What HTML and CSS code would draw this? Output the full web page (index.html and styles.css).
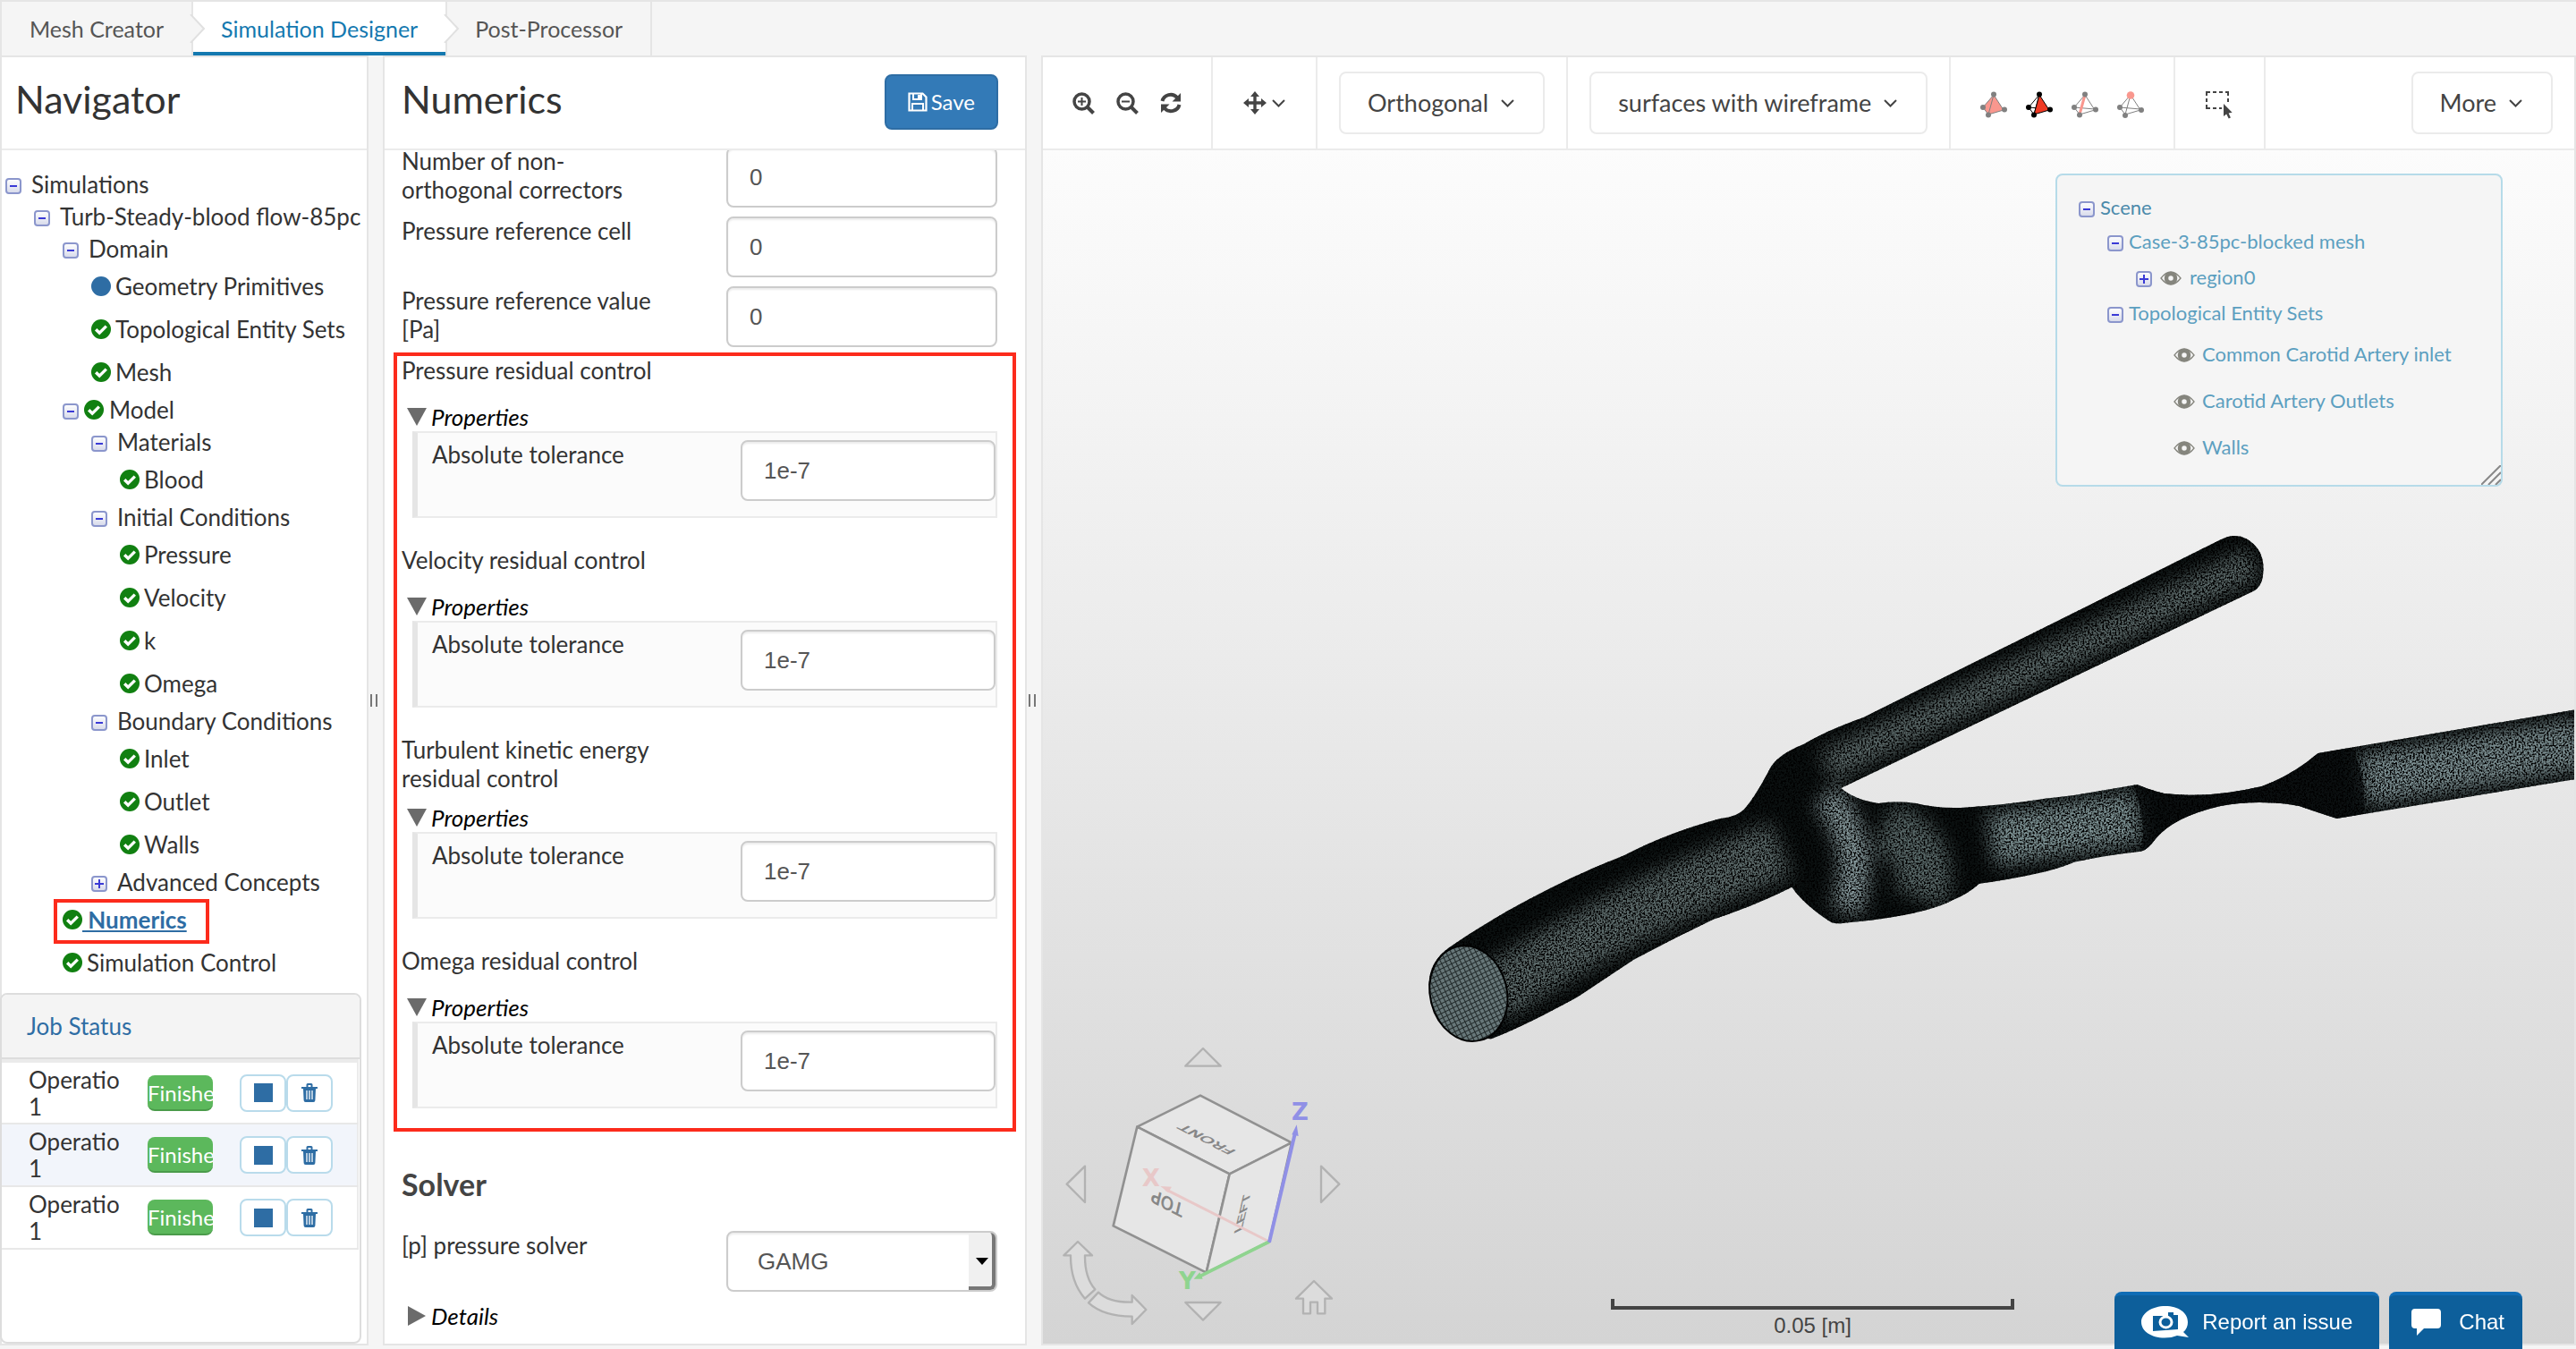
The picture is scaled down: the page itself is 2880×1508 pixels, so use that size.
FILE: index.html
```html
<!DOCTYPE html>
<html lang="en">
<head>
<meta charset="utf-8">
<meta name="viewport" content="width=device-width, initial-scale=1">
<title>Simulation Designer</title>
<link rel="stylesheet" href="styles.css">
</head>
<body>
<svg class="defs" width="0" height="0" aria-hidden="true">
  <defs>
    <linearGradient id="tg" x1="0" y1="0" x2="0" y2="1"><stop offset="0" stop-color="#fff"/><stop offset="1" stop-color="#d6d9ea"/></linearGradient>
    <symbol id="minus" viewBox="0 0 18 18"><rect x="1" y="1" width="16" height="16" rx="3" fill="url(#tg)" stroke="#8b96cc" stroke-width="2"/><path d="M5 9h8" stroke="#3a3ad6" stroke-width="2"/></symbol>
    <symbol id="plus" viewBox="0 0 18 18"><rect x="1" y="1" width="16" height="16" rx="3" fill="url(#tg)" stroke="#8b96cc" stroke-width="2"/><path d="M4 9h10M9 4v10" stroke="#3a3ad6" stroke-width="2"/></symbol>
    <symbol id="check" viewBox="0 0 22 22"><circle cx="11" cy="11" r="11" fill="#118011"/><path d="M5.200 11.200l4 4 7.600-7.600" fill="none" stroke="#fff" stroke-width="3.400"/></symbol>
    <symbol id="dot" viewBox="0 0 22 22"><circle cx="11" cy="11" r="11" fill="#2e6da4"/></symbol>
    <symbol id="eye" viewBox="0 0 24 16"><path d="M1 8Q12-6 23 8Q12 22 1 8z" fill="none" stroke="#85857d" stroke-width="1.300"/><circle cx="12" cy="8" r="5" fill="none" stroke="#85857d" stroke-width="4.500"/></symbol>
    <symbol id="chev" viewBox="0 0 15 9"><path d="M1 1l6.500 6.500L14 1" fill="none" stroke="#444" stroke-width="2"/></symbol>
    <symbol id="trash" viewBox="0 0 18 21"><path d="M0 4h18v2H0zM5.500 4V1.500Q5.500 0 7 0h4q1.500 0 1.500 1.500V4h-2V2h-3v2zM2 6h14l-.600 13q0 2-2 2H4.600q-2 0-2-2z" fill="#2e6da4"/><path d="M6 8v10M9 8v10M12 8v10" stroke="#fff" stroke-width="1.300"/></symbol>
    <symbol id="down" viewBox="0 0 22 20"><path d="M0 0h22L11 20z" fill="#6b6b6b"/></symbol>
    <symbol id="right" viewBox="0 0 22 22"><path d="M1 0v22l20-11z" fill="#6b6b6b"/></symbol>
  </defs>
</svg>

<div class="app">
  <nav class="tabs">
    <a class="tab" href="#mesh">Mesh Creator<svg class="tip" viewBox="0 0 18 32"><path d="M1 0L16 16 1 32" fill="#f5f5f5" stroke="#e0e0e0" stroke-width="2"/></svg></a>
    <a class="tab tab-on" href="#designer">Simulation Designer<svg class="tip" viewBox="0 0 18 32"><path d="M1 0L16 16 1 32" fill="#fff" stroke="#e0e0e0" stroke-width="2"/></svg></a>
    <a class="tab" href="#post">Post-Processor</a>
  </nav>

  <main class="columns">
    <section class="panel navigator">
      <header class="head head-nav"><h1>Navigator</h1></header>
      <ul class="tree">
        <li><div class="row"><svg class="toggle"><use href="#minus"/></svg><span>Simulations</span></div>
          <ul>
            <li><div class="row"><svg class="toggle"><use href="#minus"/></svg><span>Turb-Steady-blood flow-85pc</span></div>
              <ul>
                <li><div class="row"><svg class="toggle"><use href="#minus"/></svg><span>Domain</span></div>
                  <ul>
                    <li class="row leaf"><svg class="state"><use href="#dot"/></svg><span>Geometry Primitives</span></li>
                    <li class="row leaf"><svg class="state"><use href="#check"/></svg><span>Topological Entity Sets</span></li>
                    <li class="row leaf"><svg class="state"><use href="#check"/></svg><span>Mesh</span></li>
                  </ul>
                </li>
                <li><div class="row row-state"><svg class="toggle"><use href="#minus"/></svg><svg class="state"><use href="#check"/></svg><span>Model</span></div>
                  <ul>
                    <li><div class="row"><svg class="toggle"><use href="#minus"/></svg><span>Materials</span></div>
                      <ul><li class="row leaf"><svg class="state"><use href="#check"/></svg><span>Blood</span></li></ul>
                    </li>
                    <li><div class="row"><svg class="toggle"><use href="#minus"/></svg><span>Initial Conditions</span></div>
                      <ul>
                        <li class="row leaf"><svg class="state"><use href="#check"/></svg><span>Pressure</span></li>
                        <li class="row leaf"><svg class="state"><use href="#check"/></svg><span>Velocity</span></li>
                        <li class="row leaf"><svg class="state"><use href="#check"/></svg><span>k</span></li>
                        <li class="row leaf"><svg class="state"><use href="#check"/></svg><span>Omega</span></li>
                      </ul>
                    </li>
                    <li><div class="row"><svg class="toggle"><use href="#minus"/></svg><span>Boundary Conditions</span></div>
                      <ul>
                        <li class="row leaf"><svg class="state"><use href="#check"/></svg><span>Inlet</span></li>
                        <li class="row leaf"><svg class="state"><use href="#check"/></svg><span>Outlet</span></li>
                        <li class="row leaf"><svg class="state"><use href="#check"/></svg><span>Walls</span></li>
                      </ul>
                    </li>
                    <li><div class="row"><svg class="toggle"><use href="#plus"/></svg><span>Advanced Concepts</span></div></li>
                  </ul>
                </li>
                <li class="row leaf current"><svg class="state"><use href="#check"/></svg><a href="#numerics">&nbsp;Numerics</a></li>
                <li class="row leaf"><svg class="state"><use href="#check"/></svg><span>Simulation Control</span></li>
              </ul>
            </li>
          </ul>
        </li>
      </ul>

      <section class="jobs">
        <h2 class="jobs-head"><a href="#jobs">Job Status</a></h2>
        <table class="jobs-table">
          <tr><td class="col-op"><div class="op">Operation 1</div></td><td class="col-state"><div class="badge">Finished</div></td><td><div class="acts"><button class="act" aria-label="Stop"><i class="stop"></i></button><button class="act" aria-label="Delete"><svg class="trash"><use href="#trash"/></svg></button></div></td></tr>
          <tr class="alt"><td><div class="op">Operation 1</div></td><td><div class="badge">Finished</div></td><td><div class="acts"><button class="act" aria-label="Stop"><i class="stop"></i></button><button class="act" aria-label="Delete"><svg class="trash"><use href="#trash"/></svg></button></div></td></tr>
          <tr><td><div class="op">Operation 1</div></td><td><div class="badge">Finished</div></td><td><div class="acts"><button class="act" aria-label="Stop"><i class="stop"></i></button><button class="act" aria-label="Delete"><svg class="trash"><use href="#trash"/></svg></button></div></td></tr>
        </table>
      </section>
      <i class="grip"></i>
    </section>

    <section class="panel numerics">
      <header class="head head-form">
        <h1>Numerics</h1>
        <button class="save"><svg viewBox="0 0 22 22" width="22" height="22"><path d="M1.500 1.500h15l4 4v15h-19z" fill="none" stroke="#fff" stroke-width="2.200"/><path d="M6 2v6h9V2M5 20v-7h12v7" fill="none" stroke="#fff" stroke-width="2"/><path d="M11 3h3v4h-3z" fill="#fff"/></svg>Save</button>
      </header>
      <div class="scroll">
        <form class="form">
          <div class="field"><label for="f1">Number of non-orthogonal correctors</label><input id="f1" type="text" value="0"></div>
          <div class="field"><label for="f2">Pressure reference cell</label><input id="f2" type="text" value="0"></div>
          <div class="field"><label for="f3">Pressure reference value [Pa]</label><input id="f3" type="text" value="0"></div>
          <div class="residuals">
            <section class="block"><h3>Pressure residual control</h3><div class="sub"><svg><use href="#down"/></svg>Properties</div><div class="box"><label for="r1">Absolute tolerance</label><input id="r1" type="text" value="1e-7"></div></section>
            <section class="block"><h3>Velocity residual control</h3><div class="sub"><svg><use href="#down"/></svg>Properties</div><div class="box"><label for="r2">Absolute tolerance</label><input id="r2" type="text" value="1e-7"></div></section>
            <section class="block"><h3>Turbulent kinetic energy residual control</h3><div class="sub"><svg><use href="#down"/></svg>Properties</div><div class="box"><label for="r3">Absolute tolerance</label><input id="r3" type="text" value="1e-7"></div></section>
            <section class="block"><h3>Omega residual control</h3><div class="sub"><svg><use href="#down"/></svg>Properties</div><div class="box"><label for="r4">Absolute tolerance</label><input id="r4" type="text" value="1e-7"></div></section>
          </div>
          <h2>Solver</h2>
          <div class="field"><label for="s1">[p] pressure solver</label><div class="select"><select id="s1"><option>GAMG</option></select></div></div>
          <div class="sub"><svg><use href="#right"/></svg>Details</div>
        </form>
      </div>
      <i class="grip"></i>
    </section>

    <section class="panel viewer">
      <div class="toolbar">
        <div class="group zooms">
          <button class="tool" aria-label="Zoom in"><svg width="25" height="25" viewBox="0 0 25 25"><circle cx="10.500" cy="10.500" r="8.500" fill="none" stroke="#444" stroke-width="3.500"/><path d="M16.500 16.500l7 7" stroke="#444" stroke-width="4"/><path d="M6 10.500h9M10.500 6v9" stroke="#444" stroke-width="2"/></svg></button>
          <button class="tool" aria-label="Zoom out"><svg width="25" height="25" viewBox="0 0 25 25"><circle cx="10.500" cy="10.500" r="8.500" fill="none" stroke="#444" stroke-width="3.500"/><path d="M16.500 16.500l7 7" stroke="#444" stroke-width="4"/><path d="M6 10.500h9" stroke="#444" stroke-width="2"/></svg></button>
          <button class="tool" aria-label="Reset view"><svg width="24" height="24" viewBox="0 0 24 24"><path d="M2.500 10A9.500 9 0 0 1 19 6M21.500 14A9.500 9 0 0 1 5 18" fill="none" stroke="#444" stroke-width="4"/><path d="M23 1v9.500h-9.500zM1 23v-9.500h9.500z" fill="#444"/></svg></button>
        </div>
        <div class="group move"><button class="tool"  aria-label="Move"><svg width="26" height="26" viewBox="0 0 26 26"><path d="M13 0l5 6h-3.300v5.300H20V8l6 5-6 5v-3.300h-5.300V20H18l-5 6-5-6h3.300v-5.300H6V18l-6-5 6-5v3.300h5.300V6H8z" fill="#444"/></svg><svg class="chev"><use href="#chev"/></svg></button></div>
        <div class="group"><button class="drop">Orthogonal<svg class="chev"><use href="#chev"/></svg></button></div>
        <div class="group"><button class="drop">surfaces with wireframe<svg class="chev"><use href="#chev"/></svg></button></div>
        <div class="group picks">
          <button class="tool" aria-label="Pick volumes"><svg width="30" height="30" viewBox="0 0 30 30"><path d="M15 4L3 18l6 8 17-5z" fill="#f9978e" stroke="#808080"/><path d="M15 4L9 26" stroke="#808080"/><g fill="#808080"><circle cx="15" cy="3.500" r="3"/><circle cx="3" cy="18" r="3"/><circle cx="9" cy="26.500" r="3"/><circle cx="27" cy="20.500" r="3"/></g></svg></button>
          <button class="tool" aria-label="Pick faces"><svg width="30" height="30" viewBox="0 0 30 30"><path d="M15 4L3 18l6 8zM3 18l23 2" fill="none" stroke="#000"/><path d="M15 4L9 26l17-5z" fill="#f03a24" stroke="#000"/><g fill="#000"><circle cx="15" cy="3.500" r="3"/><circle cx="3" cy="18" r="3"/><circle cx="9" cy="26.500" r="3"/><circle cx="27" cy="20.500" r="3"/></g></svg></button>
          <button class="tool" aria-label="Pick edges"><svg width="30" height="30" viewBox="0 0 30 30"><path d="M15 4L3 18l6 8 17-5zM3 18l23 2" fill="none" stroke="#808080"/><path d="M15 4L9 26" stroke="#f9978e" stroke-width="3"/><g fill="#808080"><circle cx="15" cy="3.500" r="3"/><circle cx="3" cy="18" r="3"/><circle cx="9" cy="26.500" r="3"/><circle cx="27" cy="20.500" r="3"/></g></svg></button>
          <button class="tool" aria-label="Pick vertices"><svg width="30" height="30" viewBox="0 0 30 30"><path d="M15 4L3 18l6 8 17-5zM3 18l23 2M15 4L9 26" fill="none" stroke="#808080"/><circle cx="15" cy="4.500" r="4.300" fill="#f9978e"/><g fill="#808080"><circle cx="3" cy="18" r="3"/><circle cx="9" cy="27" r="3"/><circle cx="27" cy="21" r="3"/></g></svg></button>
        </div>
        <div class="group boxpick"><button class="tool" aria-label="Box select"><svg width="30" height="31" viewBox="0 0 30 31"><path d="M1 5V1h4M8 1h4M15 1h4M22 1h3v4M25 8v4M1 8v4M1 15v4h4M8 19h4M15 19h3" fill="none" stroke="#444" stroke-width="2"/><path d="M20 14v14l3.200-2.600 2.500 5.200 2.200-1.200-2.300-4.900 4-.800z" fill="#444"/></svg></button></div>
        <button class="drop more">More<svg class="chev"><use href="#chev"/></svg></button>
      </div>

      <div class="canvas">
        <svg class="model" viewBox="1166 168 1712 1336" preserveAspectRatio="xMaxYMid meet" role="img" aria-label="Artery mesh">
          <defs>
            <clipPath id="body"><path d="M1619 1060C1680 1018 1750 982 1813 958Q1862 932 1922 916Q1942 914 1950 904Q1962 890 1977 861Q1985 845 2015 833Q2040 818 2082 803L2482 604Q2498 596 2511 603Q2530 614 2530 636Q2530 655 2520 661L2057 882Q2072 895 2099 899Q2120 896 2141 899Q2165 905 2191 904Q2240 901 2284 894Q2300 892 2318 890L2389 878Q2402 884 2419 888Q2470 894 2528 880Q2562 868 2591 843L2880 794V872L2612 916Q2590 909 2570 902Q2525 894 2482 902Q2430 914 2410 938Q2400 952 2393 953Q2355 957 2318 965Q2290 978 2212 989Q2200 1000 2183 1007Q2150 1025 2061 1033Q2050 1035 2044 1031Q2015 1012 2002 993Q1960 1014 1914 1029Q1870 1050 1825 1074L1762 1116Q1700 1150 1665 1163Q1610 1160 1597 1115Q1590 1080 1619 1060z"/></clipPath>
            <filter id="soft" x="-20%" y="-20%" width="140%" height="140%"><feGaussianBlur stdDeviation="10"/></filter>
            <filter id="grain" x="0" y="0" width="100%" height="100%"><feTurbulence type="fractalNoise" baseFrequency="0.500" numOctaves="2" seed="4"/><feColorMatrix values="0 0 0 0 0  0 0 0 0 0  0 0 0 0 0  4 0 0 0 -1.650"/></filter>
            <pattern id="grid" width="5" height="5" patternUnits="userSpaceOnUse" patternTransform="rotate(-12)"><path d="M0 0H5M0 0V5" stroke="#0b1010" stroke-width="2.200"/></pattern>
          </defs>
          <g clip-path="url(#body)">
            <path d="M1580 580H2880V1180H1580z" fill="#0b1010"/>
            <g filter="url(#soft)" fill="none">
              <path d="M1665 1115Q1790 1030 1990 950" stroke="#5a6868" stroke-width="64"/>
              <path d="M2040 858L2520 630" stroke="#5b6969" stroke-width="36"/>
              <path d="M2040 890Q2090 950 2062 1020" stroke="#8b9ea1" stroke-width="34"/>
              <path d="M2105 925Q2165 950 2145 1005" stroke="#596767" stroke-width="60"/>
              <path d="M2225 940L2392 914" stroke="#7c9092" stroke-width="60"/>
              <path d="M2640 873L2890 832" stroke="#7a8d90" stroke-width="60"/>
            </g>
            <path d="M2384 878Q2400 920 2393 953Q2410 950 2440 918L2480 903H2530L2612 916Q2645 918 2643 900Q2643 860 2628 836L2591 843Q2560 868 2528 880L2444 890z" fill="#0b1011" opacity=".7"/>
            <path d="M1580 580H2880V1180H1580z" filter="url(#grain)"/>
          </g>
          <ellipse cx="1640" cy="1112" rx="43" ry="54" transform="rotate(-14 1640 1112)" fill="#68787a"/>
          <ellipse cx="1640" cy="1112" rx="43" ry="54" transform="rotate(-14 1640 1112)" fill="url(#grid)" fill-opacity=".75" stroke="#000" stroke-width="2"/>
        </svg>

        <aside class="scene">
          <ul class="scene-tree">
            <li><div class="srow first"><svg class="toggle"><use href="#minus"/></svg><a href="#scene">Scene</a></div>
              <ul>
                <li><div class="srow"><svg class="toggle"><use href="#minus"/></svg><a href="#case">Case-3-85pc-blocked mesh</a></div>
                  <ul><li class="srow seen"><svg class="toggle"><use href="#plus"/></svg><svg class="eye"><use href="#eye"/></svg><a href="#region0">region0</a></li></ul>
                </li>
                <li><div class="srow"><svg class="toggle"><use href="#minus"/></svg><a href="#sets">Topological Entity Sets</a></div>
                  <ul class="sets">
                    <li class="srow sleaf"><svg class="eye"><use href="#eye"/></svg><a href="#inlet">Common Carotid Artery inlet</a></li>
                    <li class="srow sleaf"><svg class="eye"><use href="#eye"/></svg><a href="#outlets">Carotid Artery Outlets</a></li>
                    <li class="srow sleaf"><svg class="eye"><use href="#eye"/></svg><a href="#walls">Walls</a></li>
                  </ul>
                </li>
              </ul>
            </li>
          </ul>
          <svg class="resize" viewBox="0 0 22 22"><path d="M0 22L22 0M8 22L22 8M16 22l6-6" stroke="#888" stroke-width="2"/></svg>
        </aside>

        <svg class="cube" viewBox="18 0 1122 1062" role="img" aria-label="View cube">
          <g fill="#dcdcdc" stroke="#b2b2b2" stroke-width="7" stroke-linejoin="round">
            <path d="M555 72L614 131H496zM555 983L614 924H496zM98 527L159 467V588zM1012 527L951 467V588z"/>
            <path d="M135 720L183 766H159Q158 840 193 880L159 911Q110 855 111 766H88zM204 890Q240 925 317 923V900L364 948 317 996V971Q220 970 171 925z"/>
            <path d="M927 852L987 911H964V961H939V923H915V961H891V911H867z"/>
          </g>
          <g fill="#e6e6e6" stroke="#919191" stroke-width="8" stroke-linejoin="round">
            <path d="M334 335L546 230 852 388 644 493z"/>
            <path d="M334 335L644 493 566 824 254 667z"/>
            <path d="M644 493L852 388 777 720 566 824z"/>
          </g>
          <g class="cube-face">
            <text transform="matrix(-.89 -.46 .6 -.31 580 371)">FRONT</text>
            <text transform="matrix(-.89 -.46 .23 -.96 440 571)">TOP</text>
            <text transform="matrix(.23 -.96 .6 -.31 700 618)">LEFT</text>
          </g>
          <path d="M777 720L430 545" stroke="#e8c8c8" stroke-width="9"/><path d="M412 534l38 2-12 19z" fill="#e8c8c8"/>
          <path d="M777 720L545 836" stroke="#8fd48f" stroke-width="11"/><path d="M524 845l20-22 10 22z" fill="#8fd48f"/>
          <path d="M777 722L864 355" stroke="#9090e6" stroke-width="12"/><path d="M869 328l6 38-22-5z" fill="#9090e6"/>
          <g class="cube-axis">
            <text x="350" y="535" fill="#e8c8c8">X</text><text x="474" y="880" fill="#8fd48f">Y</text><text x="852" y="312" fill="#9090e6">Z</text>
          </g>
        </svg>

        <div class="scale"><i></i>0.05 [m]</div>
      </div>
    </section>
  </main>
</div>

<div class="support">
  <button class="help"><svg width="54" height="36" viewBox="0 0 54 36"><path d="M27 0C41 0 52 7 52 18Q52 25 47 29l6 6-13-2Q34 35.500 26 35.500C11 35.500 0 28 0 18S12 0 27 0z" fill="#fff"/><path d="M13 11h17V7h6v3h5v16l-28 2z" fill="#0d5f9b"/><ellipse cx="27.500" cy="18" rx="6.500" ry="6" fill="none" stroke="#fff" stroke-width="3"/></svg>Report an issue</button>
  <button class="help chat"><svg width="33" height="30" viewBox="0 0 33 30"><path d="M4 0h25q4 0 4 4v14q0 4-4 4H14l-8 8V22H4q-4 0-4-4V4q0-4 4-4z" fill="#fff"/></svg>Chat</button>
</div>
</body>
</html>
```
FILE: styles.css
```css
*, *::before, *::after { box-sizing: border-box; }
body { margin: 0; background: #f5f5f5; color: #333; font: 26px/32px Lato, sans-serif; }
h1, h2, h3, ul { margin: 0; padding: 0; font-weight: 400; }
ul { list-style: none; }
a { color: inherit; text-decoration: none; }
button, input, select { font: inherit; color: inherit; margin: 0; }
svg { display: block; flex: none; }
.defs { position: absolute; }

.app { display: flex; flex-direction: column; min-height: 100vh; padding-bottom: 4px; }

.tabs { display: flex; height: 62px; border-top: 2px solid #e5e5e5; border-left: 2px solid #e5e5e5; font-size: 25px; }
.tab { position: relative; display: flex; align-items: center; padding: 0 31px; border-right: 2px solid #e5e5e5; color: #555; }
.tab-on { background: #fff; color: #1479b0; box-shadow: inset 0 -4px #1479b0; }
.tip { position: absolute; z-index: 1; left: 100%; top: 14px; width: 18px; height: 32px; margin-left: -2px; }

.columns { flex: 1; display: grid; grid-template-columns: 412px 720px minmax(0, 1fr); gap: 16px; }
.panel { position: relative; display: flex; flex-direction: column; min-width: 0; background: #fff; border: 2px solid #e5e5e5; }
.head { display: flex; align-items: center; height: 104px; border-bottom: 2px solid #ebebeb; }
.head h1 { padding-bottom: 8px; font-size: 43px; line-height: 48px; }
.head-nav { padding: 0 15px; }
.head-form { padding: 0 30px 0 19px; justify-content: space-between; }
.grip { position: absolute; left: 100%; top: 712px; width: 8px; height: 14px; margin-left: 4px; border: solid #777; border-width: 0 2px; }

.tree { padding: 20px 0 0 4px; }
.tree ul { padding-left: 32px; }
.row { display: flex; align-items: center; gap: 11px; height: 36px; white-space: nowrap; }
.row.leaf { gap: 5px; height: 48px; }
.row-state { gap: 6px; }
.toggle { width: 18px; height: 18px; margin-top: 4px; }
.state { width: 22px; height: 22px; }
.current { position: relative; }
.row.current { gap: 0; }
.current a { color: #2e6da4; font-weight: 700; text-decoration: underline; }
.current::after { content: ""; position: absolute; left: -10px; top: 1px; width: 174px; height: 50px; border: 4px solid #fc2b1c; }

.jobs { flex: 1; margin: 10px 6px 0 -2px; border: 2px solid #ddd; border-radius: 8px; overflow: hidden; }
.jobs-head { display: flex; align-items: center; height: 72px; padding-left: 28px; background: #f4f4f4; border-bottom: 2px solid #ddd; font-size: 26px; color: #2e6da4; }
.jobs-table { width: 399px; table-layout: fixed; border-collapse: collapse; border-top: 4px solid #ebebeb; border-right: 2px solid #ebebeb; }
.jobs-table tr { height: 70px; border-bottom: 2px solid #e8e8e8; }
.jobs-table .alt { background: #f2f5fb; }
.jobs-table td { padding: 0; }
.col-op { width: 163px; }
.col-state { width: 103px; }
.op { width: 102px; height: 60px; margin-left: 30px; line-height: 30px; overflow: hidden; }
.badge { width: 73px; height: 40px; border-radius: 8px; background: #5cb85c; border-bottom: 2px solid #4a9b4a; color: #fff; font-size: 24px; line-height: 40px; overflow: hidden; }
.acts { display: flex; }
.act { display: grid; place-items: center; width: 52px; height: 42px; padding: 0; background: #fff; border: 2px solid #b9dbeb; border-radius: 8px; }
.stop { width: 21px; height: 21px; background: #2e6da4; }
.trash { width: 18px; height: 21px; }

.save { display: flex; align-items: center; gap: 4px; height: 62px; margin-bottom: 2px; padding: 0 24px; background: #337ab7; border: 2px solid #2e6da4; border-radius: 8px; color: #fff; font-size: 24px; }
.scroll { flex: 1; overflow: hidden; }
.form { margin-top: -4px; padding: 0 31px 0 19px; }
.field { display: flex; justify-content: space-between; align-items: flex-start; height: 78px; }
.field label { width: 300px; }
.field input, .select { width: 303px; }
input, select { height: 68px; padding: 0 24px; background: #fff; border: 2px solid #ccc; border-radius: 8px; box-shadow: inset 0 2px 2px rgba(0, 0, 0, .075); color: #555; font-family: "Liberation Sans", sans-serif; }
.residuals { position: relative; }
.residuals::after { content: ""; position: absolute; inset: -4px -21px 5px -9px; border: 4px solid #fc2b1c; pointer-events: none; }
.block { padding-bottom: 31px; }
.block h3 { width: 300px; min-height: 40px; margin-bottom: 11px; font-size: 26px; }
.sub { display: flex; align-items: center; gap: 5px; height: 33px; padding-left: 6px; color: #000; font-style: italic; }
.sub svg { width: 22px; height: 22px; }
.box { display: flex; justify-content: space-between; align-items: flex-start; height: 97px; margin-left: 12px; padding: 8px 0 0 16px; background: #fbfbfb; border: 2px solid #ebebeb; border-left: 6px solid #e5e5e5; }
.box input { width: 285px; }
.form h2 { margin: 34px 0 32px; font-size: 34px; line-height: 40px; font-weight: 700; color: #444; }
.select { position: relative; }
.select select { appearance: none; width: 100%; padding-left: 33px; }
.select::after { content: ""; position: absolute; right: 2px; top: 2px; width: 30px; height: 64px; background: #f0f0f0; border: solid #777; border-width: 0 4px 4px 0; border-radius: 0 6px 6px 0; pointer-events: none; }
.select::before { content: ""; position: absolute; z-index: 1; right: 10px; top: 30px; border: 7px solid transparent; border-top: 8px solid #000; border-bottom: 0; pointer-events: none; }

.toolbar { display: flex; height: 104px; border-bottom: 2px solid #ebebeb; }
.group { display: flex; align-items: center; padding: 0 24px; border-right: 2px solid #ebebeb; }
.tool { display: flex; align-items: center; gap: 6px; padding: 0; border: 0; background: none; }
.zooms { gap: 24px; padding: 0 33px; }
.move { padding: 0 34px; }
.picks { gap: 21px; padding: 4px 33px 0; }
.boxpick { padding: 4px 35px 0 34px; }
.chev { width: 15px; height: 9px; }
.drop { display: flex; align-items: center; gap: 14px; height: 70px; padding: 0 32px 0 30px; background: #fff; border: 2px solid #ebebeb; border-radius: 8px; color: #444; font-size: 27px; white-space: nowrap; }
.more { margin: 16px 24px 0 auto; }

.canvas { position: relative; flex: 1; overflow: hidden; background: linear-gradient(#fcfcfc, #d4d4d4); }
.model { position: absolute; inset: 0; width: 100%; height: 100%; }
.scene { position: absolute; right: 80px; top: 26px; width: 500px; height: 350px; padding: 18px 0 0 24px; background: #f5f5f5; border: 2px solid #b6dbe9; border-radius: 8px; color: #5c9fc0; font-size: 22px; }
.scene-tree ul { padding-left: 32px; }
.scene-tree .sets { padding-left: 74px; }
.srow { display: flex; align-items: center; gap: 6px; height: 40px; }
.srow.first { height: 36px; color: #4b8aab; }
.srow.sleaf { height: 52px; gap: 8px; }
.srow.seen { gap: 9px; }
.eye { width: 24px; height: 16px; margin-top: 2px; }
.resize { position: absolute; right: 0; bottom: 0; width: 22px; height: 22px; }
.cube { position: absolute; left: 0; bottom: 0; width: 374px; height: 354px; }
.cube-face { font: 58px "DejaVu Sans", sans-serif; fill: #858585; stroke: #858585; stroke-width: 2; text-anchor: middle; }
.cube-axis { font: 700 78px "DejaVu Sans", sans-serif; }
.scale { position: absolute; left: 635px; bottom: 2px; width: 451px; color: #444; font: 24px/36px "Liberation Sans", sans-serif; text-align: center; }
.scale i { display: block; height: 12px; border: solid #444; border-width: 0 4px 4px; }

.support { position: fixed; right: 60px; bottom: 0; display: flex; gap: 11px; }
.help { display: flex; align-items: center; gap: 14px; height: 64px; padding: 0 30px; background: #0d5f9b; border: 0; border-top: 4px solid #0f6cb5; border-radius: 8px 8px 0 0; color: #fff; font: 24px "Liberation Sans", sans-serif; }
.chat { gap: 20px; padding: 0 20px 0 25px; }
```
